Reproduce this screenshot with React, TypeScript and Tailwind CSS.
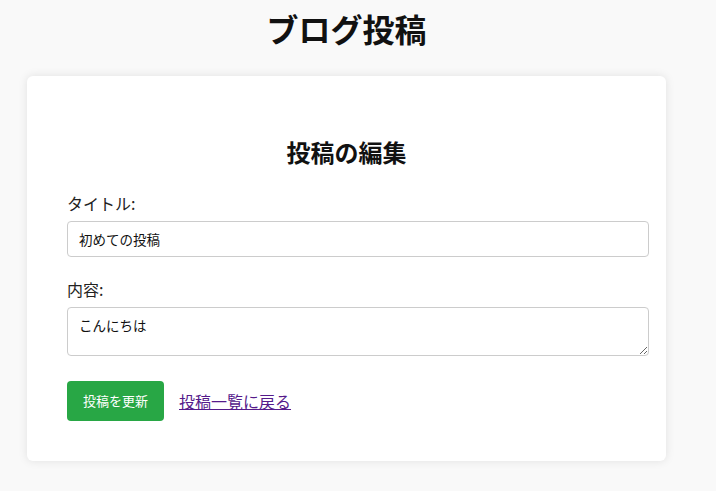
const App: React.FC = () => {
  return (
    <div
      className="min-h-[491px] bg-[#f9f9f9] text-[#222] pt-[4px]"
      style={{ fontFamily: '"Noto Sans CJK JP", "Noto Sans", sans-serif' }}
    >
      <div className="ml-[27px] w-[639px]">
        <h1 className="text-center text-[32px] font-bold leading-[48px] text-[#111]">
          ブログ投稿
        </h1>
        <div className="mt-[24px] bg-white rounded-[6px] shadow-[0_0_10px_rgba(0,0,0,0.1)] p-[40px]">
          <h2 className="mt-[18px] text-center text-[24px] font-bold leading-[36px] text-[#111]">
            投稿の編集
          </h2>
          <form className="mt-[21px] flex flex-col">
            <label className="text-[16px] leading-[24px] text-[#222]">タイトル:</label>
            <input
              type="text"
              defaultValue="初めての投稿"
              className="mt-[6px] w-[582px] h-[36px] px-[11px] border border-[#ccc] rounded-[4px] text-[13.5px] text-[#111] outline-none"
            />
            <label className="mt-[20px] text-[16px] leading-[24px] text-[#222]">内容:</label>
            <textarea
              defaultValue="こんにちは"
              className="mt-[6px] w-[582px] h-[49px] px-[11px] py-[8px] border border-[#ccc] rounded-[4px] text-[13.5px] leading-[18px] text-[#111] outline-none resize-y"
            />
            <div className="mt-[25px] flex items-center gap-[15px]">
              <button
                type="button"
                className="w-[97px] h-[40px] bg-[#28a745] text-white text-[13px] rounded-[4px]"
              >
                投稿を更新
              </button>
              <a href="#" className="text-[16px] text-[#551a8b] underline">
                投稿一覧に戻る
              </a>
            </div>
          </form>
        </div>
      </div>
    </div>
  );
};

export default App;
